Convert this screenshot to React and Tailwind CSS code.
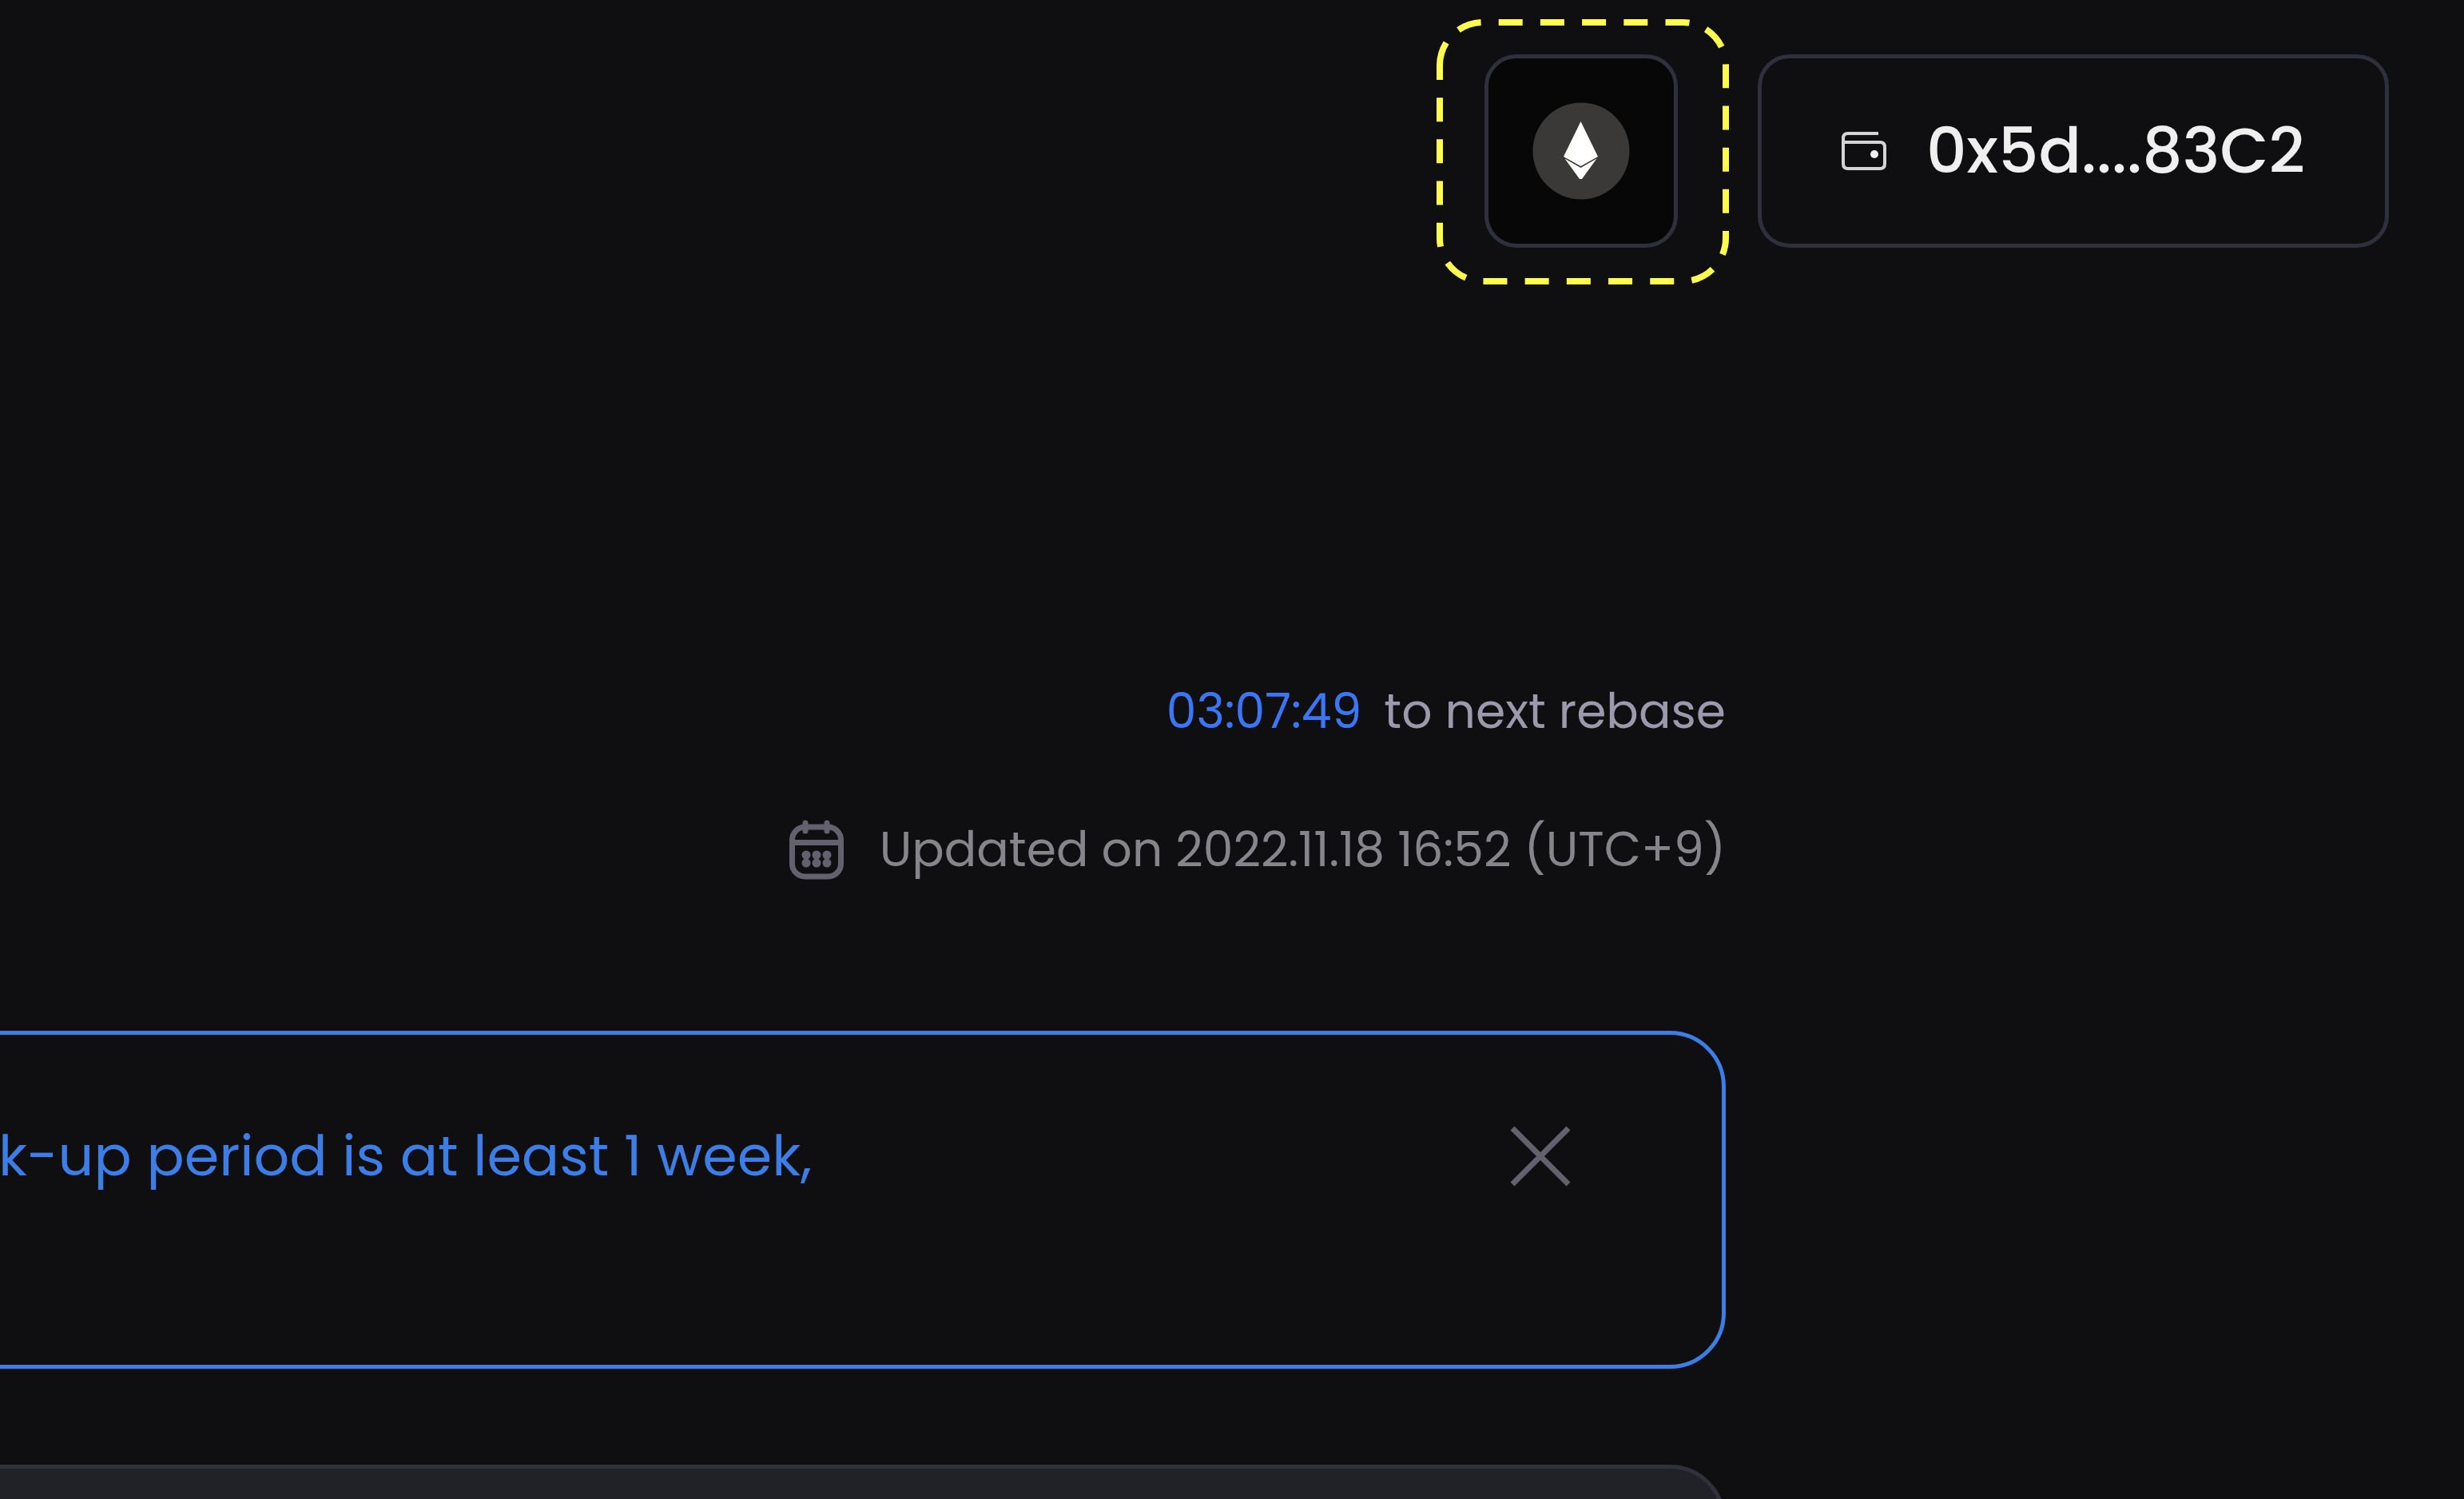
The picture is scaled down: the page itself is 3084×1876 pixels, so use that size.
function HighlightFrame() {
  return (
    <svg viewBox="0 0 367 332" className="pointer-events-none absolute inset-0 size-full" fill="none" stroke="#fffc4f" strokeWidth="8" strokeDasharray="30 22.2" aria-hidden="true">
      <path d="M5 58A54 54 0 0 1 59 4H309A54 54 0 0 1 363 58V274A54 54 0 0 1 309 328H59A54 54 0 0 1 5 274Z" />
    </svg>
  );
}

function EthMark() {
  return (
    <svg viewBox="0 0 122 122" className="size-[122px]" aria-hidden="true">
      <circle cx="61" cy="61" r="60.5" fill="#3a3937" />
      <path d="M60.500 24 39 68 60.500 80 82 68Z" fill="#fff" />
      <path d="M40.500 70.500 60.500 82 80.500 70.500 62 96H59Z" fill="#fff" />
    </svg>
  );
}

function WalletIcon() {
  return (
    <svg viewBox="0 0 56 50" className="h-[50px] w-[56px]" fill="none" stroke="#d4d4d5" strokeWidth="4" aria-hidden="true">
      <path d="M46 3H8Q2 3 2 9V41Q2 47 8 47H48Q54 47 54 41V20Q54 14 48 14H3" />
      <circle cx="41" cy="29" r="5" fill="#efefef" stroke="none" />
    </svg>
  );
}

const calendarDots = [
  [22, 45], [35, 45], [48, 45],
  [22, 55], [35, 55], [48, 55],
];

function CalendarIcon() {
  return (
    <svg viewBox="0 0 70 76" className="h-[76px] w-[70px]" fill="none" stroke="#62616d" strokeWidth="7" strokeLinecap="round" aria-hidden="true">
      <rect x="4.500" y="10" width="61" height="62" rx="16" />
      <path d="M5 29.500H65M21 5V15M48 5V15" />
      {calendarDots.map(([x, y]) => (
        <circle key={`${x}-${y}`} cx={x} cy={y} r="5.500" fill="#62616d" stroke="none" />
      ))}
    </svg>
  );
}

function CloseIcon() {
  return (
    <svg viewBox="0 0 76 76" className="size-[76px]" stroke="#62616d" strokeWidth="7" aria-hidden="true">
      <path d="M3 3 73 73M73 3 3 73" />
    </svg>
  );
}

export default function App() {
  return (
    <div className="flex h-screen flex-col overflow-hidden bg-[#0f0f11] font-[Poppins,Lato,sans-serif]">
      <header className="flex shrink-0 items-start justify-end gap-9 pt-6 pr-[94px]">
        <div className="relative pt-11 pr-16 pb-[46px] pl-[61px]">
          <button type="button" aria-label="Ethereum network" className="flex size-[242px] items-center justify-center rounded-[40px] border-[5px] border-[#2f303d] bg-[#070707]">
            <EthMark />
          </button>
          <HighlightFrame />
        </div>
        <button type="button" className="mt-11 flex h-[242px] w-[790px] items-center justify-center gap-[50px] rounded-[40px] border-[5px] border-[#2f303d] text-[79px] font-medium text-[#efefef]">
          <WalletIcon />
          0x5d....83C2
        </button>
      </header>

      <main className="mr-[924px] flex flex-1 flex-col pt-[490px]">
        <p className="flex justify-end gap-7 text-[60px] leading-[88px] text-[#9c99ac]">
          <time className="text-[#3a76f6]">03:07:49</time>
          to next rebase
        </p>
        <p className="mt-[85px] flex items-center justify-end gap-11 text-[60px] leading-[88px] text-[#86858b]">
          <CalendarIcon />
          Updated on 2022.11.18 16:52 (UTC+9)
        </p>

        <section className="-ml-24 mt-[183px] flex min-h-[423px] items-start justify-between rounded-[70px] border-[5px] border-[#3c7de6] pt-[102px] pr-[189px] pl-[89px]">
          <p className="text-[70px] leading-[100px] text-[#3c7de6]">k-up period is at least 1 week,</p>
          <button type="button" aria-label="Close notice" className="flex h-[100px] items-center">
            <CloseIcon />
          </button>
        </section>

        <section className="-ml-24 mt-[120px] min-h-[240px] shrink-0 rounded-[70px] border-[5px] border-[#30313d] bg-[#212227]" />
      </main>
    </div>
  );
}
